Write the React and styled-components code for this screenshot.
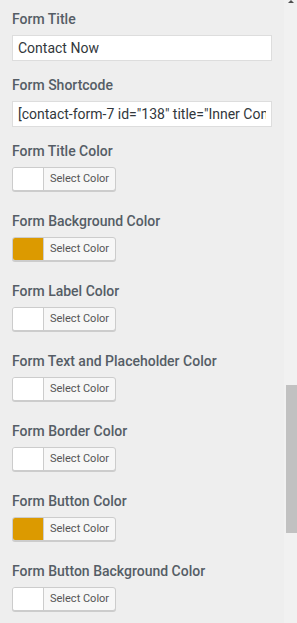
import React from "react";
import styled, { createGlobalStyle } from "styled-components";

const GlobalStyle = createGlobalStyle`
  html, body {
    margin: 0;
    padding: 0;
    background: #eeeeee;
  }
  body {
    font-family: Roboto, "Liberation Sans", sans-serif;
  }
`;

const Page = styled.div`
  display: flex;
  width: 297px;
  height: 623px;
  overflow: hidden;
  background: #eeeeee;
`;

const Panel = styled.div`
  width: 284px;
  flex: 0 0 auto;
  padding: 9px 0 0 12px;
  box-sizing: border-box;
`;

const Track = styled.div`
  flex: 1 1 auto;
  background: #f1f1f1;
  display: flex;
  flex-direction: column;
  align-items: flex-end;
`;

const Arrow = styled.div`
  width: 0;
  height: 0;
  margin: 0 3px 0 0;
  border-left: 3px solid transparent;
  border-right: 3px solid transparent;
  border-bottom: 3px solid #505050;
`;

const Thumb = styled.div`
  width: 11px;
  height: 148px;
  margin-top: 382px;
  background: #c1c1c1;
`;

const Control = styled.div`
  margin-bottom: ${({ $color }) => ($color ? "20px" : "14px")};
`;

const Label = styled.div`
  font-size: 14px;
  line-height: 20px;
  font-weight: 500;
  color: #555d66;
  margin-bottom: 6px;
`;

const TextInput = styled.input`
  display: block;
  width: 260px;
  height: 26px;
  box-sizing: border-box;
  margin: 0;
  background: #fff;
  border: 1px solid #dddddd;
  border-radius: 0;
  padding: 0 5px;
  font-family: Roboto, "Liberation Sans", sans-serif;
  font-size: 14px;
  line-height: 24px;
  color: #32373c;
  outline: none;
`;

const Picker = styled.div`
  display: flex;
  width: 104px;
  height: 24px;
  box-sizing: border-box;
  border: 1px solid #cccccc;
  border-radius: 3px;
  box-shadow: 0 1px 0 #cccccc;
  overflow: hidden;
  background: #f7f7f7;
`;

const Swatch = styled.div`
  width: 30px;
  flex: 0 0 auto;
  background: ${({ $bg }) => $bg};
  border-right: 1px solid #cccccc;
`;

const PickerText = styled.div`
  flex: 1;
  font-size: 11px;
  line-height: 22px;
  color: #555555;
  padding-left: 6px;
`;

const textFields = [
  { label: "Form Title", value: "Contact Now" },
  { label: "Form Shortcode", value: '[contact-form-7 id="138" title="Inner Contact"]' },
];

const colorFields = [
  { label: "Form Title Color", color: "#ffffff" },
  { label: "Form Background Color", color: "#dc9a00" },
  { label: "Form Label Color", color: "#ffffff" },
  { label: "Form Text and Placeholder Color", color: "#ffffff" },
  { label: "Form Border Color", color: "#ffffff" },
  { label: "Form Button Color", color: "#dc9a00" },
  { label: "Form Button Background Color", color: "#ffffff" },
];

export default function App() {
  return (
    <Page>
      <GlobalStyle />
      <Panel>
        {textFields.map((f) => (
          <Control key={f.label}>
            <Label>{f.label}</Label>
            <TextInput type="text" readOnly value={f.value} />
          </Control>
        ))}
        {colorFields.map((f) => (
          <Control key={f.label} $color>
            <Label>{f.label}</Label>
            <Picker>
              <Swatch $bg={f.color} />
              <PickerText>Select Color</PickerText>
            </Picker>
          </Control>
        ))}
      </Panel>
      <Track>
        <Arrow />
        <Thumb />
      </Track>
    </Page>
  );
}
